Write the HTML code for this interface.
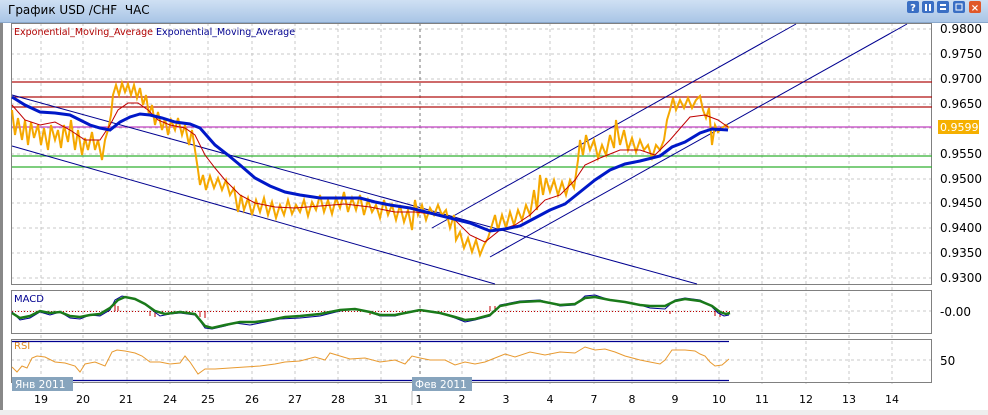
<!DOCTYPE html>
<html><head><meta charset="utf-8"><style>
body{margin:0;width:988px;height:415px;overflow:hidden;background:#f4f4f4;font-family:"DejaVu Sans","Noto Sans CJK SC",sans-serif}
.t{position:absolute;left:0;top:0;width:988px;height:22px;background:linear-gradient(#cfe0f3,#a9c5e6);border-bottom:1px solid #8aa8cc}
.t span{position:absolute;left:8px;top:3px;font-size:12px;color:#000}
</style></head><body>
<div class="t"><span>График USD /CHF&nbsp; ЧАС</span></div>
<svg width="988" height="415" style="position:absolute;left:0;top:0" font-family="DejaVu Sans, sans-serif">
<rect x="0" y="23" width="988" height="392" fill="#fff"/>
<rect x="0" y="23" width="3" height="392" fill="#888"/>
<rect x="0" y="410" width="988" height="5" fill="#eee"/>
<g>
<rect x="907" y="1" width="12" height="12" rx="2" fill="#3a6fc4"/><text x="913" y="11" font-size="10" fill="#fff" text-anchor="middle" font-weight="bold">?</text>
<rect x="922" y="1" width="12" height="12" rx="2" fill="#3a6fc4"/><rect x="925" y="4" width="2" height="7" fill="#fff"/><rect x="929" y="4" width="2" height="7" fill="#fff"/>
<rect x="937" y="1" width="12" height="12" rx="2" fill="#3a6fc4"/><rect x="940" y="4" width="6" height="2" fill="#fff"/><rect x="940" y="8" width="6" height="2" fill="#fff"/>
<rect x="953" y="1" width="12" height="12" rx="2" fill="#3a6fc4"/><rect x="956" y="4" width="6" height="6" fill="none" stroke="#fff"/>
<rect x="969" y="1" width="12" height="12" rx="2" fill="#e0582a"/><text x="975" y="11" font-size="10" fill="#fff" text-anchor="middle" font-weight="bold">×</text>
</g>
<g stroke="#c8c8c8" stroke-dasharray="3,3" stroke-width="1">
<path d="M41 23V384M83 23V384M127 23V384M170 23V384M208 23V384M252 23V384M295 23V384M338 23V384M381 23V384M462 23V384M506 23V384M550 23V384M594 23V384M632 23V384M676 23V384M719 23V384M762 23V384M806 23V384M849 23V384M892 23V384"/>
<path d="M11 29H932M11 54H932M11 79H932M11 104H932M11 128H932M11 154H932M11 179H932M11 203H932M11 228H932M11 253H932M11 278H932M11 311H932M11 360H932"/>
</g>
<path d="M420 23V384" stroke="#777" stroke-dasharray="3,3"/>
<g fill="none" stroke="#808080"><rect x="11.5" y="23.5" width="920" height="261"/><rect x="11.5" y="290.5" width="920" height="43"/><rect x="11.5" y="339.5" width="920" height="43"/></g>
<text x="14" y="35" font-size="9.5" fill="#b00000">Exponential_Moving_Average <tspan fill="#000090">Exponential_Moving_Average</tspan></text>
<g stroke-width="1.3"><path d="M12 82H932M12 97H932M12 107H932" stroke="#b01010"/><path d="M12 127H932" stroke="#c040c0"/><path d="M12 156H932M12 167H932" stroke="#30b030"/></g>
<g stroke="#000090" stroke-width="1" fill="none"><path d="M12 95L697 284"/><path d="M12 146L495 284"/><path d="M432 228L796 24"/><path d="M490 257L907 24"/></g>
<polyline fill="none" stroke="#f5a800" stroke-width="2" points="12,110 15,135 18,118 22,140 25,120 28,145 31,122 34,138 38,125 41,145 44,128 48,150 51,125 55,140 58,130 61,148 64,125 68,142 71,120 75,150 78,130 82,155 85,138 88,150 92,132 95,150 98,140 102,160 105,140 108,130 111,115 113,95 116,85 119,95 122,83 125,92 128,84 131,95 134,85 137,98 140,88 143,105 146,95 149,115 152,105 155,125 158,112 162,130 165,118 168,135 171,120 175,130 178,118 182,135 185,125 189,145 192,130 195,150 198,170 200,185 203,175 206,190 210,176 214,188 218,178 222,190 226,180 230,195 234,188 238,212 241,195 244,210 248,198 252,215 256,200 260,212 264,198 268,215 272,202 276,218 280,205 284,215 288,200 292,214 296,205 300,212 304,200 308,216 312,202 316,210 320,195 324,212 328,200 332,214 336,198 340,208 344,192 348,212 352,198 356,210 360,195 364,215 368,200 372,212 376,205 380,218 384,200 388,215 392,205 396,220 400,205 404,222 408,210 412,230 415,200 418,215 422,205 426,220 430,208 434,215 438,205 442,215 446,210 450,228 454,215 456,240 460,232 464,248 468,238 472,252 476,240 480,255 484,245 488,238 492,225 495,215 498,230 502,215 506,228 510,212 514,225 518,210 522,220 526,205 530,215 534,190 537,210 540,175 543,195 546,178 550,192 554,180 558,195 562,182 566,195 570,180 574,188 578,160 580,140 583,155 586,135 590,150 594,140 598,158 602,145 606,155 610,135 614,148 616,120 620,145 624,130 628,150 632,138 636,152 640,140 644,150 648,145 652,158 656,145 660,150 664,140 667,120 670,110 673,98 676,110 680,100 684,108 688,98 692,108 696,100 700,96 703,110 706,118 709,108 712,145 715,125 718,132 722,128 726,125 729,128"/>
<polyline fill="none" stroke="#c00000" stroke-width="1" points="12,105 25,120 40,125 55,122 70,130 85,140 100,140 110,125 118,110 128,103 138,103 148,110 158,120 170,125 185,128 195,135 205,155 215,168 225,180 240,195 255,203 275,207 295,208 320,206 345,204 370,207 395,212 415,212 440,215 455,220 470,235 485,242 500,230 515,225 530,215 545,200 560,195 575,180 585,165 600,158 620,150 640,150 655,155 670,140 690,117 705,115 718,120 728,127"/>
<polyline fill="none" stroke="#0018c8" stroke-width="3" points="12,97 25,105 40,112 55,113 70,115 80,120 90,125 100,128 110,130 120,122 130,117 140,114 150,115 162,118 175,122 190,124 200,128 215,145 228,155 240,165 255,178 270,186 285,192 300,195 320,198 340,198 360,198 375,202 390,205 410,208 430,213 450,218 470,223 490,231 505,229 520,226 535,218 550,210 565,204 580,192 595,180 610,170 625,164 640,161 660,156 672,147 685,142 700,133 712,129 728,130"/>
<g font-size="12" fill="#000">
<text x="940" y="33">0.9800</text><text x="940" y="58">0.9750</text><text x="940" y="83">0.9700</text><text x="940" y="108">0.9650</text><text x="940" y="158">0.9550</text><text x="940" y="183">0.9500</text><text x="940" y="207">0.9450</text><text x="940" y="232">0.9400</text><text x="940" y="257">0.9350</text><text x="940" y="282">0.9300</text><text x="940" y="316">-0.00</text><text x="940" y="365">50</text>
</g>
<rect x="938" y="120" width="41" height="14" fill="#f5b000"/><text x="940" y="131" font-size="11" fill="#fff">0.9599</text>
<text x="14" y="302" font-size="10" fill="#000090">MACD</text>
<path d="M12 311.5H732" stroke="#c00000" stroke-dasharray="1,2"/>
<g stroke="#c00000" stroke-width="1"><path d="M115 311V303M118 311V306M150 311V316M155 311V317M200 311V317M205 311V318M370 311V315M490 311V306M495 311V306M670 311V314M715 311V316M720 311V317"/></g>
<polyline fill="none" stroke="#000090" stroke-width="1" points="12,312 20,320 30,318 40,312 50,315 60,312 70,318 80,319 90,315 100,316 110,310 115,300 122,296 132,298 142,302 152,310 160,316 170,314 180,313 195,315 200,321 205,328 212,329 225,326 235,323 250,325 265,322 280,319 300,318 320,316 340,311 355,309 370,312 380,316 395,316 410,312 420,310 440,313 455,318 465,322 475,320 490,316 500,305 520,301 540,300 560,306 575,305 585,296 595,295 610,300 625,302 640,305 650,308 665,309 675,300 685,298 700,300 710,305 718,313 724,316 729,315"/>
<polyline fill="none" stroke="#1a7a1a" stroke-width="2.5" points="12,313 20,318 30,316 40,311 50,313 60,312 70,316 80,317 90,315 100,314 110,308 118,300 125,297 135,299 145,304 155,311 165,314 180,312 195,314 205,326 212,328 225,325 240,322 255,322 270,320 285,317 300,316 320,314 340,310 355,309 370,312 380,315 395,315 410,312 420,310 440,313 455,317 465,320 475,319 490,315 500,306 520,302 540,301 560,305 575,304 585,298 595,297 610,300 625,302 640,305 650,306 665,306 675,301 685,299 700,301 712,306 720,312 726,314 730,313"/>
<text x="14" y="349" font-size="10" fill="#e08a20">RSI</text>
<path d="M12 341.5H729M12 380.5H729" stroke="#000090" stroke-width="1.3"/>
<polyline fill="none" stroke="#e89a30" stroke-width="1" points="12,367 17,372 22,366 27,368 32,358 37,356 45,357 55,362 65,363 75,366 80,372 85,364 95,362 105,366 112,352 117,350 125,351 135,353 142,356 150,362 160,362 170,364 180,363 185,356 190,362 198,374 205,369 215,369 230,368 245,367 260,366 275,364 285,362 300,361 315,357 325,360 330,353 340,356 350,359 365,358 380,362 395,360 405,364 412,356 420,358 430,360 445,360 455,365 465,362 475,364 485,362 495,358 505,354 515,357 530,352 545,355 560,352 575,353 585,347 595,350 605,349 615,352 625,356 640,360 650,362 660,364 665,360 672,350 685,350 695,351 700,354 705,356 710,362 715,366 722,365 729,359"/>
<rect x="12" y="377" width="61" height="14" fill="#87a4bd"/><text x="15" y="388" font-size="10.5" fill="#fff">Янв 2011</text>
<rect x="412" y="377" width="60" height="14" fill="#87a4bd"/><text x="415" y="388" font-size="10.5" fill="#fff">Фев 2011</text>
<g font-size="11" fill="#000" text-anchor="middle">
<text x="41" y="403">19</text><text x="83" y="403">20</text><text x="126" y="403">21</text><text x="170" y="403">24</text><text x="208" y="403">25</text><text x="252" y="403">26</text><text x="295" y="403">27</text><text x="338" y="403">28</text><text x="381" y="403">31</text><text x="419" y="403">1</text><text x="462" y="403">2</text><text x="506" y="403">3</text><text x="550" y="403">4</text><text x="594" y="403">7</text><text x="632" y="403">8</text><text x="675" y="403">9</text><text x="719" y="403">10</text><text x="762" y="403">11</text><text x="806" y="403">12</text><text x="849" y="403">13</text><text x="892" y="403">14</text>
</g>
<path d="M412 391V405" stroke="#bbb"/>
</svg>
</body></html>
